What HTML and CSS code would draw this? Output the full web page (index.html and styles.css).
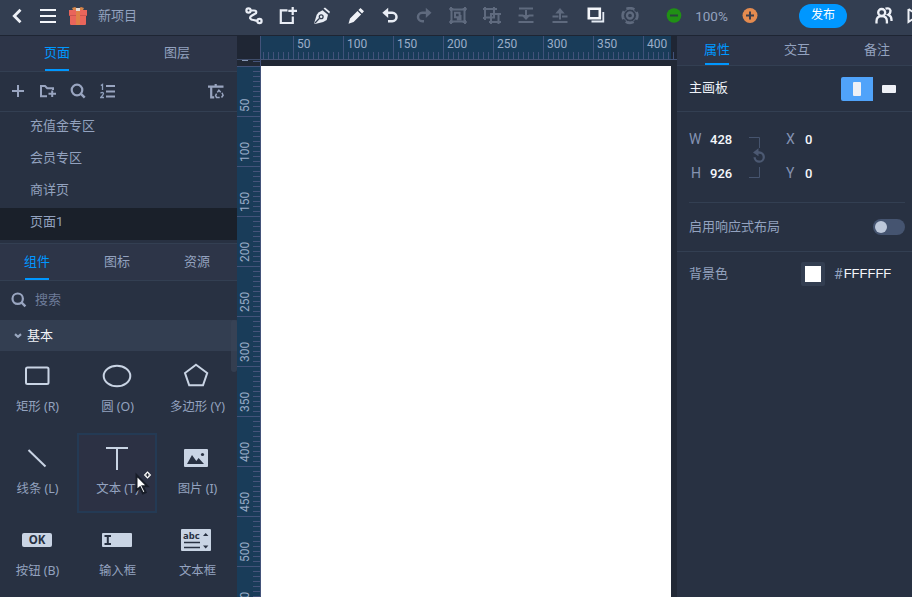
FILE: index.html
```html
<!DOCTYPE html>
<html lang="zh-CN">
<head>
<meta charset="utf-8">
<title>新项目</title>
<link rel="stylesheet" href="styles.css">
</head>
<body>
<div class="app">
<header class="topbar">
  <div class="topbar-left">
    <svg class="i-back" width="12" height="16" viewBox="0 0 12 16"><path d="M9.5 1.8 3.3 8l6.2 6.2" fill="none" stroke="#eef1f7" stroke-width="2.8"/></svg>
    <svg class="i-menu" width="16" height="16" viewBox="0 0 16 16"><path d="M0 2h16M0 8h16M0 14h16" stroke="#f4f6fa" stroke-width="2"/></svg>
    <svg class="i-gift" width="18" height="18" viewBox="0 0 18 18"><path d="M4 3 3 1l3-1 3 2 3-2 3 1-1 2z" fill="#d98548"/><path d="M0 3h18v6h-1v8.2l-.8.8H1.8l-.8-.8V9H0z" fill="#e9655b"/><path d="M0 8.5h18" stroke="#ca554f"/><path d="M7 3h4v15H7z" fill="#df8147"/><path d="M7 1h4v3H7z" fill="#e5dbd5"/></svg>
    <span class="project">新项目</span>
  </div>
  <div class="tools">
    <svg viewBox="0 0 18 18"><g fill="none" stroke="#e9edf5" stroke-width="2.2"><circle cx="3.5" cy="3.5" r="2.1"/><circle cx="14.5" cy="14" r="2.1"/><path d="M6 3.5h3q3 0 2 2.7L7 8.5q-2.5 1.5-1.7 3T8.5 13l3.5.9"/></g></svg>
    <svg viewBox="0 0 18 18"><path d="M8.5 3.3H1.8V16h12V9.5M9.3 3.9H18M13.7 0v8" fill="none" stroke="#e9edf5" stroke-width="2.2"/></svg>
    <svg viewBox="0 0 18 18"><path d="m10.5 1.5 1.5-1 5 4.2-.8 1.8z" fill="#e9edf5"/><path d="M9.5 3.2 15 7.7 13.7 13l-3.5 2L2 17 1.2 16 3.7 7.8 5.5 5.5z" fill="#e9edf5"/><path d="m2 16 4.3-4.5" stroke="#333e51" stroke-width="1.2"/><circle cx="8.2" cy="9.8" r="1.9" fill="none" stroke="#333e51" stroke-width="1.3"/></svg>
    <svg viewBox="0 0 18 18"><path d="m13.5 1 3.5 3.3-2 2.2-3.6-3.4zM10.5 4l3.6 3.5-7.5 7.5L1.5 16.7 3 11.5z" fill="#f0f2f7"/></svg>
    <svg viewBox="0 0 18 18"><path d="M3 5.8h8.3a4.2 4.2 0 0 1 0 8.4H7" fill="none" stroke="#e9edf5" stroke-width="2.5"/><path d="M7.2.7v10.2L1.3 5.8z" fill="#e9edf5"/></svg>
    <svg viewBox="0 0 18 18"><path d="M15 5.8H7.2a4.2 4.2 0 0 0 0 8.4H9" fill="none" stroke="#5f6a7e" stroke-width="2.5"/><path d="M10.8.7v10.2l5.7-5.1z" fill="#5f6a7e"/></svg>
    <svg viewBox="0 0 18 18" class="dim"><path d="M2.5 2.5h13v12h-13zM6 5.8h4.6v4.4H6zM11.5 8v4.2H7.8"/><path d="M.3 2h4M2 0v4M13.7 2h4M16 0v4M.3 15h4M2 13v4M13.7 15h4M16 13v4"/></svg>
    <svg viewBox="0 0 18 18" class="dim"><path d="M2 2h9v8.5H2zM8 7h7.5v8H8zM0 2h3M2 0v3M10 2h4M11 0v3M0 11h3M2 9.5V13M15 7h3M8 15v2M15.5 15v2M15 15h3M6 15h3"/></svg>
    <svg viewBox="0 0 18 18" class="dim"><path d="M2 1.5h14M1.5 15h15M9 3v7M1.5 8.5h5M11.5 8.5h5"/><path d="M4.3 8h9.4L9 13z" class="solid"/></svg>
    <svg viewBox="0 0 18 18" class="dim"><path d="M1.5 15h15M1.5 9.5h6M11 9.5h5.5M9 6v6.5"/><path d="M4.3 6.5h9.4L9 1z" class="solid"/></svg>
    <svg viewBox="0 0 18 18" class="i-copy"><path d="M1.8 1.8h11v9.4h-11z" fill="none" stroke="#f4f6fa" stroke-width="2.6"/><path d="M4.5 14.5h11.8V5" fill="none" stroke="#e4eaf3" stroke-width="1.8"/></svg>
    <svg viewBox="0 0 18 18" class="dim"><circle cx="9" cy="8.5" r="7.6" stroke-width="2.2" stroke-dasharray="8.5 3.44" stroke-dashoffset="4"/><circle cx="9" cy="8.5" r="6.5" stroke-width="1"/><circle cx="9" cy="8.5" r="3" stroke-width="2.3"/></svg>
  </div>
  <div class="zoom">
    <svg width="16" height="16" viewBox="0 0 16 16"><circle cx="8" cy="7.5" r="7.3" fill="#209015"/><path d="M4 7.5h8" stroke="#28433c" stroke-width="2"/></svg>
    <span>100%</span>
    <svg width="16" height="16" viewBox="0 0 16 16"><circle cx="8" cy="7.5" r="7.5" fill="#e58b4f"/><path d="M4 7.5h8M8 3.5v8" stroke="#3c3e4b" stroke-width="2"/></svg>
  </div>
  <div class="publish">发布</div>
  <svg class="i-users" width="18" height="18" viewBox="0 0 18 18"><g fill="none" stroke="#eef1f7" stroke-width="2.3"><circle cx="6.7" cy="5.5" r="3.5"/><path d="M1.5 16.5v-2.3q0-5 5.2-5t5.2 5v2.3M10.5 1.7q4-1.3 5 1.8 0 3-2.2 4.2 3.2 1.4 3.2 5V14"/></g></svg>
  <svg class="i-play" width="10" height="18" viewBox="0 0 10 18"><path d="M2.5 2v13L10 10M2.5 2 10 7" fill="none" stroke="#eef1f7" stroke-width="2"/></svg>
</header>
<div class="body">
<aside class="left">
  <nav class="tabs pages-tabs"><div class="tab on">页面</div><div class="tab">图层</div></nav>
  <div class="page-tools">
    <svg width="12" height="12" viewBox="0 0 12 12"><path d="M6 0v12M0 6h12" stroke="#99a5c0" stroke-width="2"/></svg>
    <svg width="18" height="14" viewBox="0 0 18 14"><path d="M8 12.2H2V2h4l2.2 2.2H14V6M9.5 9.8H17M13.2 6.5v6.5" fill="none" stroke="#99a5c0" stroke-width="2"/></svg>
    <svg width="16" height="16" viewBox="0 0 16 16"><circle cx="7" cy="7" r="5.3" fill="none" stroke="#99a5c0" stroke-width="2.2"/><path d="m10.7 10.7 4 4" stroke="#99a5c0" stroke-width="2.4"/></svg>
    <svg width="16" height="16" viewBox="0 0 16 16"><path d="M6 3h9M6 8.5h9M6 13.5h9" stroke="#99a5c0" stroke-width="2"/><path d="M.8 2.5 2.5 1.5V7M.5 10.3q2-1.8 3 0 0 1.2-2.8 4.2H4" fill="none" stroke="#8fa0bd" stroke-width="1.3"/></svg>
    <svg class="i-trash" width="16" height="16" viewBox="0 0 16 16"><path d="M0 3.7h15.5M7.7 1v2.5M3.2 4v10.3h3" fill="none" stroke="#99a5c0" stroke-width="2.2"/><path d="m9.3 9.4 1.6-2.2 1.8 2M14 9.8l1.1 2.5-1.6 2.2M11.7 14.4H8.5l-.9-1.9 1-1.8" fill="none" stroke="#99a5c0" stroke-width="1.5"/></svg>
  </div>
  <ul class="pages"><li>充值金专区</li><li>会员专区</li><li>商详页</li><li class="current">页面1</li></ul>
  <nav class="tabs parts-tabs"><div class="tab on">组件</div><div class="tab">图标</div><div class="tab">资源</div></nav>
  <div class="search"><svg width="16" height="16" viewBox="0 0 16 16"><circle cx="6.7" cy="6.7" r="5.2" fill="none" stroke="#99a5c0" stroke-width="2.2"/><path d="m10.4 10.4 4 4" stroke="#99a5c0" stroke-width="2.4"/></svg><span>搜索</span></div>
  <div class="group"><svg width="8" height="6" viewBox="0 0 8 6"><path d="m1 1.2 3 2.6 3-2.6" fill="none" stroke="#9aa8c0" stroke-width="2.2"/></svg><span>基本</span><i class="scrollbar"></i></div>
  <div class="parts">
    <div class="part"><svg viewBox="0 0 32 26"><rect x="5" y="4.5" width="22.5" height="16.5" rx="1.5"/></svg><span>矩形 (R)</span></div>
    <div class="part"><svg viewBox="0 0 32 26"><ellipse cx="16" cy="13" rx="13.3" ry="10.2"/></svg><span>圆 (O)</span></div>
    <div class="part"><svg viewBox="0 0 32 26"><path d="M15 1.8 26.2 10 22 22.3H8.2L4 10z"/></svg><span>多边形 (Y)</span></div>
    <div class="part"><svg viewBox="0 0 32 26"><path d="m7.5 5 17 16.5"/></svg><span>线条 (L)</span></div>
    <div class="part hover"><svg viewBox="0 0 32 26"><path d="M5 3h22M16 3v22"/></svg><span>文本 (T)</span>
      <svg class="cursor" width="18" height="24" viewBox="0 0 18 24"><path d="M1.5 4v15.5l3.5-3.2 3 6.2 2.7-1.3-3-5.9h4.8z" fill="#fff" stroke="#181d28"/><path d="m12.5.3 3.7 3.7-3.7 3.7L8.8 4z" fill="#fff"/><path d="M10.7 4h3.6M12.5 2.2v3.6" stroke="#1c202c" stroke-width="1.2"/></svg></div>
    <div class="part"><svg viewBox="0 0 32 26"><rect x="3" y="4" width="24" height="18" rx="1" class="fill"/><path d="m6 19 5-9 4.3 6 2.3-3L23 19z" class="ink"/><circle cx="21.5" cy="9.5" r="1.6" class="ink"/></svg><span>图片 (I)</span></div>
    <div class="part"><b class="ok">OK</b><span>按钮 (B)</span></div>
    <div class="part"><svg viewBox="0 0 32 26"><rect x="1" y="6" width="30" height="14" rx="1" class="fill"/><path d="M3.5 9H10M3.5 17H10M6.8 9v8" class="inkline"/></svg><span>输入框</span></div>
    <div class="part"><div class="abc"><b>abc</b><svg width="30" height="22" viewBox="0 0 30 22"><path d="M3 13.5h16M3 18.5h16" class="inkthin"/><path d="m22 7 2.7-3 2.7 3zM22 16.5h5.4l-2.7 3z" class="ink"/></svg></div><span>文本框</span></div>
  </div>
</aside>
<main class="stage">
  <div class="corner"></div>
  <div class="ruler-x"><div class="scale-x"><span></span><span>50</span><span>100</span><span>150</span><span>200</span><span>250</span><span>300</span><span>350</span><span>400</span></div></div>
  <div class="ruler-y"><div class="before"></div><div class="scale-y"><span>50</span><span>100</span><span>150</span><span>200</span><span>250</span><span>300</span><span>350</span><span>400</span><span>450</span><span>500</span><span>550</span></div></div>
  <div class="canvas"><div class="artboard"></div></div>
</main>
<aside class="right">
  <nav class="tabs prop-tabs"><div class="tab on">属性</div><div class="tab">交互</div><div class="tab">备注</div></nav>
  <section class="board"><span>主画板</span><div class="orient on"><i></i></div><div class="orient flat"><i></i></div></section>
  <section class="size">
    <div class="fields"><label>W</label><b>428</b><label>H</label><b>926</b></div>
    <svg class="link" width="18" height="44" viewBox="0 0 18 44"><path d="M1 2.5h10.5V13M11.5 32v10.5H1" fill="none" stroke="#46546e"/><path d="M8 17.5h3.2a4.6 4.6 0 1 1-4.6 4.8" fill="none" stroke="#4c5972" stroke-width="2.3"/><path d="M10.5 13.3v8L5 17.4z" fill="#4c5972"/></svg>
    <div class="fields"><label>X</label><b>0</b><label>Y</label><b>0</b></div>
  </section>
  <section class="responsive"><span>启用响应式布局</span><div class="switch"><i></i></div></section>
  <section class="bg"><span>背景色</span><div class="swatch"><i></i></div><em>#</em><strong>FFFFFF</strong></section>
</aside>
</div>
</div>
</body>
</html>
```

FILE: styles.css
```css
* { box-sizing: border-box; }
body { margin: 0; background: #283142; color: #93a2bf; font: 13px/20px Roboto, "Noto Sans CJK SC", sans-serif; overflow: hidden; }
svg { display: block; flex: none; }
ul { margin: 0; padding: 0; list-style: none; }
i, em { font-style: normal; display: block; }
.app { width: 912px; height: 597px; display: flex; flex-direction: column; overflow: hidden; }

.topbar { height: 36px; flex: none; display: flex; align-items: center; padding-bottom: 4px; background: #333e51; border-bottom: 1px solid #1e2533; }
.topbar-left { width: 237px; display: flex; align-items: center; flex: none; }
.i-back { margin-left: 11px; }
.i-menu { margin-left: 17px; }
.i-gift { margin-left: 13px; margin-top: 1px; }
.project { margin-left: 11px; }
.tools { width: 408px; flex: none; display: flex; }
.tools svg { width: 18px; height: 18px; margin: 0 8px; }
.tools .i-copy { margin: 0 8px 0 10px; }
.tools .i-copy + svg { margin: 0 6px 0 8px; }
.dim { fill: none; stroke: #5f6a7e; stroke-width: 2; }
.dim .solid { fill: #5f6a7e; stroke: none; }
.zoom { display: flex; align-items: center; margin-left: 21px; }
.zoom span { width: 60px; padding-right: 1px; text-align: center; font-size: 13.5px; }
.zoom span + svg { margin-left: 0; }
.publish { width: 48px; height: 24px; margin-left: 41px; border-radius: 12px; background: #0097ff; color: #fff; text-align: center; line-height: 23px; font-size: 12px; flex: none; }
.i-users { margin-left: 28px; }
.i-play { margin-left: 13px; }

.body { flex: 1; min-height: 0; display: flex; }
.left { width: 237px; flex: none; background: #283142; }
.tabs { display: flex; background: #2d3548; border-bottom: 1px solid #333f52; }
.tab { flex: 1; display: flex; justify-content: center; position: relative; }
.tab.on { color: #0097ff; }
.tab.on::after { content: ""; position: absolute; bottom: 0; width: 24px; height: 2px; background: #0097ff; }
.pages-tabs { height: 36px; }
.pages-tabs .tab { padding-top: 7px; flex: none; width: 114px; }
.pages-tabs .tab + .tab { width: 126px; }
.page-tools { height: 40px; display: flex; align-items: center; padding: 0 13px 1px 12px; border-bottom: 1px solid #333f52; }
.page-tools svg:nth-child(2) { margin-left: 15px; }
.page-tools svg:nth-child(3) { margin-left: 13px; }
.page-tools svg:nth-child(4) { margin-left: 14px; }
.page-tools .i-trash { margin-left: auto; }
.pages { height: 132px; padding-bottom: 3px; border-bottom: 1px solid #333f52; }
.pages li { height: 32px; padding-left: 30px; line-height: 27px; }
.pages .current { background: #1a202a; }
.parts-tabs { height: 37px; }
.parts-tabs .tab { flex: none; width: 80px; padding-top: 8px; }
.parts-tabs .tab:first-child { width: 74px; }
.parts-tabs .tab:nth-child(2) { width: 86px; }
.parts-tabs .tab:nth-child(3) { width: 74px; }
.search { height: 39px; display: flex; align-items: center; padding: 0 0 1px 11px; color: #6d7b98; }
.search span { margin-left: 8px; }
.group { height: 31px; display: flex; align-items: center; padding-left: 14px; background: #333e51; color: #f1f3f8; position: relative; }
.group span { margin-left: 5px; }
.scrollbar { position: absolute; right: 0; top: 0; width: 6px; height: 52px; background: #394557; border-radius: 3px; opacity: .7; }
.parts { margin-left: -3px; display: grid; grid-template-columns: repeat(3, 80px); grid-auto-rows: 80px; row-gap: 2px; }
.part { display: flex; flex-direction: column; align-items: center; padding-top: 10px; border: 2px solid transparent; font: 12.4px/20px "Noto Sans", "Noto Sans CJK SC", sans-serif; position: relative; }
.part > svg { width: 32px; height: 26px; fill: none; stroke: #c9d4e4; stroke-width: 2; }
.part > span { margin: 8px 0 0 1px; white-space: nowrap; }
.part .fill { fill: #c9d4e4; stroke: none; }
.part .ink { fill: #283142; stroke: none; }
.inkline { stroke: #283142; stroke-width: 2; }
.inkthin { stroke: #283142; stroke-width: 1.5; }
.hover { background: #2c3144; border-color: #243a54; }
.part > .cursor { position: absolute; left: 56px; top: 36px; width: 18px; height: 24px; stroke: none; }
.ok { width: 30px; height: 14px; margin: 6px 0; border-radius: 2px; background: #c9d4e4; color: #283142; text-align: center; font: bold 11.5px/14px "Noto Sans", sans-serif; }
.abc { position: relative; width: 30px; height: 22px; margin: 2px 2px 2px 0; background: #c9d4e4; border-radius: 1px; color: #283142; }
.abc b { position: absolute; left: 2px; top: 0; font: bold 9.5px/13px "Noto Sans", sans-serif; }

.stage { width: 440px; flex: none; display: grid; grid-template: 24px 1fr / 24px 1fr; background: #212835; overflow: hidden; }
.corner { background: #1f2634; border-right: 1px solid #43537a; border-bottom: 1px solid #3f4d6a; }
.ruler-x { overflow: hidden; background: linear-gradient(#445577, #445577) 0 23px / 100% 1px no-repeat, repeating-linear-gradient(90deg, transparent 0 2px, #43527a 2px 3px, transparent 3px 5px) 0 16px / 100% 8px no-repeat, linear-gradient(90deg, #193c59 410px, #1f2634 410px); color: #9badc8; }
.scale-x { display: flex; width: 432px; }
.scale-x span { flex: none; width: 50px; height: 23px; padding-left: 3px; border-left: 1px solid #40537a; font-size: 12px; line-height: 16px; }
.scale-x span:first-child { width: 32px; border: 0; }
.scale-x span:last-child { width: 28px; overflow: hidden; }
.ruler-y { overflow: hidden; border-right: 1px solid #43537a; background: repeating-linear-gradient(transparent 0 1px, #45537a 1px 2px, transparent 2px 5px) 16px 0 / 7px 100% no-repeat, linear-gradient(#212835 6px, #193c59 6px); color: #9badc8; }
.before { height: 7px; border-bottom: 1px solid #43537a; background: linear-gradient(#8797b5, #8797b5) 5px 0 / 6px 1px no-repeat; }
.scale-y { display: flex; flex-direction: column; }
.scale-y span { flex: none; height: 50px; width: 23px; writing-mode: vertical-rl; transform: rotate(180deg); border-top: 1px solid #43537a; padding-top: 4px; font-size: 12px; line-height: 16px; }
.canvas { padding-top: 6px; display: flex; overflow: hidden; }
.artboard { width: 410px; background: #fff; }

.right { flex: 1; min-width: 0; background: #283142; overflow: hidden; }
.prop-tabs { height: 30px; width: 240px; }
.prop-tabs .tab { padding-top: 4px; }
.board { height: 46px; display: flex; align-items: center; padding-left: 12px; color: #eef2f9; border-bottom: 1px solid #333f52; }
.board span { margin-top: -1px; }
.orient { width: 32px; height: 24px; display: flex; align-items: center; justify-content: center; }
.orient i { width: 8px; height: 14px; border-radius: 1px; background: #eef0f6; }
.orient.on { margin-left: auto; background: #50a3fa; border-radius: 2px 0 0 2px; }
.orient.flat { margin-right: 7px; }
.orient.flat i { width: 14px; height: 8px; }
.size { height: 91px; margin: 0 7px 0 12px; padding-top: 11px; display: flex; border-bottom: 1px solid #333f52; }
.fields { display: grid; grid-template-columns: 21px 38px; grid-auto-rows: 34px; line-height: 33px; font-size: 14px; }
.fields label { color: #8493b3; }
.fields label:nth-child(3) { padding-left: 2px; }
.fields b { font-weight: 500; color: #f5f7fb; font-size: 13px; }
.link { margin: 12px 20px 0 0; }
.fields + .link + .fields { grid-template-columns: 19px 38px; }
.fields + .link + .fields label { padding: 0; }
.responsive { height: 49px; display: flex; align-items: center; padding: 0 7px 0 12px; border-bottom: 1px solid #333f52; }
.responsive span { margin-top: -1px; }
.switch { width: 32px; height: 16px; margin-left: auto; border-radius: 8px; background: #455470; padding: 2px; }
.switch i { width: 12px; height: 12px; border-radius: 50%; background: #bdc8da; }
.bg { height: 44px; display: flex; align-items: center; padding-left: 12px; }
.swatch { width: 24px; height: 24px; margin-left: 73px; padding: 4px; background: #333e51; border-radius: 2px; }
.swatch i { width: 16px; height: 16px; background: #fff; }
.bg span { margin-top: -1px; }
.bg em { margin-left: 9px; font-size: 14px; }
.bg strong { margin-left: 1px; font: 13px/20px "Liberation Sans", sans-serif; color: #f5f7fb; }
```
